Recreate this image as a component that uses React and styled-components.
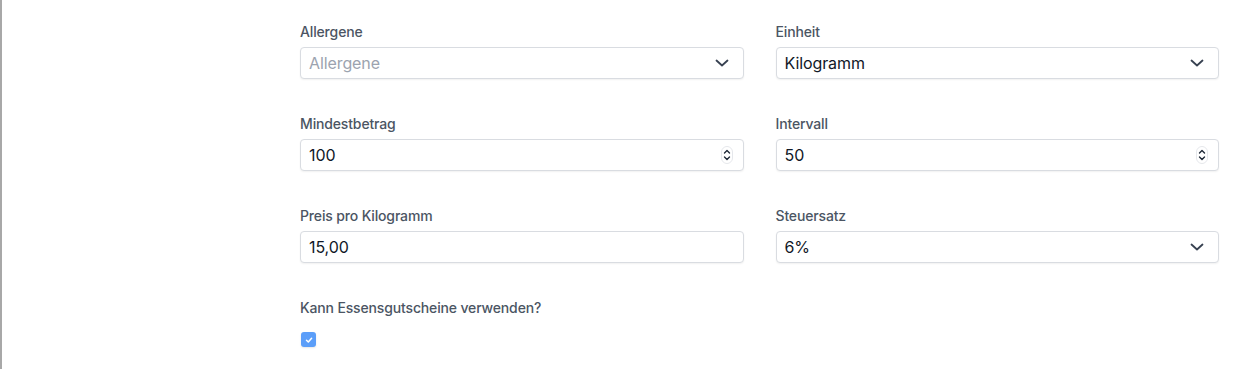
import React, { useState } from 'react'
import styled, { createGlobalStyle } from 'styled-components'

const GlobalStyle = createGlobalStyle`
  html, body {
    margin: 0;
    padding: 0;
    background: #ffffff;
  }
  body {
    font-family: Inter, "Noto Sans", Roboto, sans-serif;
    -webkit-font-smoothing: antialiased;
  }
`;

const ChevronDown = () => (
  <svg width="16" height="16" viewBox="0 0 16 16" fill="none">
    <path d="M2.5 5.5 L8 10.5 L13.5 5.5" stroke="#374151" strokeWidth="1.8" strokeLinecap="round" strokeLinejoin="round" />
  </svg>
);

const Spinner = () => (
  <svg width="12" height="18" viewBox="0 0 12 18" fill="none">
    <rect x="0.5" y="0.5" width="11" height="17" rx="5.5" stroke="#e5e7eb" />
    <path d="M3.5 7 L6 4.5 L8.5 7" stroke="#1f2937" strokeWidth="1.4" strokeLinecap="round" strokeLinejoin="round" />
    <path d="M3.5 11 L6 13.5 L8.5 11" stroke="#1f2937" strokeWidth="1.4" strokeLinecap="round" strokeLinejoin="round" />
  </svg>
);

const App = () => {
  const [checked, setChecked] = useState(true);

  return (
    <>
      <GlobalStyle />
      <Page>
        <Form>
          <Field>
            <Label>Allergene</Label>
            <Control>
              <Value $placeholder>Allergene</Value>
              <Icon $right={13}><ChevronDown /></Icon>
            </Control>
          </Field>
          <Field>
            <Label>Einheit</Label>
            <Control>
              <Value>Kilogramm</Value>
              <Icon $right={13}><ChevronDown /></Icon>
            </Control>
          </Field>

          <Field>
            <Label>Mindestbetrag</Label>
            <Control>
              <Value>100</Value>
              <Icon $right={10}><Spinner /></Icon>
            </Control>
          </Field>
          <Field>
            <Label>Intervall</Label>
            <Control>
              <Value>50</Value>
              <Icon $right={10}><Spinner /></Icon>
            </Control>
          </Field>

          <Field>
            <Label>Preis pro Kilogramm</Label>
            <Control>
              <Value>15,00</Value>
            </Control>
          </Field>
          <Field>
            <Label>Steuersatz</Label>
            <Control>
              <Value>6%</Value>
              <Icon $right={13}><ChevronDown /></Icon>
            </Control>
          </Field>

          <Field>
            <Label>Kann Essensgutscheine verwenden?</Label>
            <CheckRow>
              <Checkbox $checked={checked} onClick={() => setChecked(!checked)}>
                {checked && (
                  <svg width="10" height="10" viewBox="0 0 10 10" fill="none">
                    <path d="M2.5 5.2 L4.3 7 L7.6 3.3" stroke="#ffffff" strokeWidth="1.5" strokeLinecap="round" strokeLinejoin="round" />
                  </svg>
                )}
              </Checkbox>
            </CheckRow>
          </Field>
        </Form>
      </Page>
    </>
  )
}

export default App;

const Page = styled.div`
  height: 369px;
  box-sizing: border-box;
  border-left: 2px solid #a8a8a8;
  padding: 22px 29px 0 298px;
  overflow: hidden;
`;

const Form = styled.div`
  display: grid;
  grid-template-columns: 1fr 1fr;
  column-gap: 32px;
  row-gap: 35px;
`;

const Field = styled.div`
  display: flex;
  flex-direction: column;
`;

const Label = styled.label`
  font-size: 14px;
  line-height: 20px;
  font-weight: 500;
  letter-spacing: -0.15px;
  color: #4b5563;
  margin-bottom: 5px;
`;

const Control = styled.div`
  position: relative;
  height: 32px;
  box-sizing: border-box;
  border: 1px solid #d9dce1;
  border-radius: 4px;
  box-shadow: 0 1px 2px rgba(0, 0, 0, 0.06);
  background: #ffffff;
  display: flex;
  align-items: center;
  padding: 0 8px;
`;

const Value = styled.span`
  font-size: 16px;
  letter-spacing: -0.1px;
  color: ${p => (p.$placeholder ? '#9ca3af' : '#111827')};
`;

const Icon = styled.span`
  position: absolute;
  right: ${p => p.$right}px;
  top: 50%;
  transform: translateY(-50%);
  display: flex;
`;

const CheckRow = styled.div`
  display: flex;
  padding-top: 9px;
  padding-left: 1px;
`;

const Checkbox = styled.span`
  width: 15px;
  height: 15px;
  border-radius: 3px;
  background: ${p => (p.$checked ? '#5b9ef9' : '#ffffff')};
  border: ${p => (p.$checked ? 'none' : '1px solid #d1d5db')};
  box-shadow: 0 1px 2px rgba(0, 0, 0, 0.1);
  display: flex;
  align-items: center;
  justify-content: center;
  cursor: pointer;
`;
